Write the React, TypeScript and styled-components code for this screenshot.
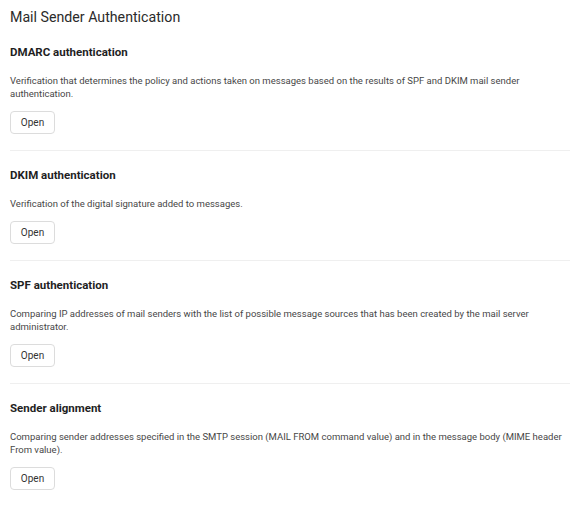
import React from 'react';
import styled, { createGlobalStyle } from 'styled-components';

const GlobalStyle = createGlobalStyle`
  body {
    margin: 0;
    background: #ffffff;
    font-family: Roboto, 'Liberation Sans', sans-serif;
    color: #262626;
  }
`;

const Page = styled.div`
  padding: 7px 13px 0 10px;
`;

const Title = styled.h1`
  margin: 0 0 1px;
  font-size: 14.2px;
  font-weight: 400;
  line-height: 20px;
  color: #2b2b2b;
`;

const Section = styled.section<{ last?: boolean }>`
  padding: 16px 0;
  border-bottom: ${(p) => (p.last ? 'none' : '1px solid #efefef')};
`;

const Heading = styled.h2`
  margin: 0 0 14px;
  font-size: 11.5px;
  font-weight: 700;
  line-height: 16px;
  color: #1f1f1f;
`;

const Description = styled.p`
  margin: 0 0 11px;
  font-size: 9.5px;
  line-height: 13px;
  color: #474747;
`;

const OpenButton = styled.button`
  display: inline-flex;
  align-items: center;
  justify-content: center;
  width: 45px;
  height: 23px;
  padding: 0;
  border: 1px solid #dcdcdc;
  border-radius: 4px;
  background: #ffffff;
  font-family: inherit;
  font-size: 10px;
  color: #333333;
`;

const items = [
  {
    title: 'DMARC authentication',
    text: 'Verification that determines the policy and actions taken on messages based on the results of SPF and DKIM mail sender authentication.',
  },
  {
    title: 'DKIM authentication',
    text: 'Verification of the digital signature added to messages.',
  },
  {
    title: 'SPF authentication',
    text: 'Comparing IP addresses of mail senders with the list of possible message sources that has been created by the mail server administrator.',
  },
  {
    title: 'Sender alignment',
    text: 'Comparing sender addresses specified in the SMTP session (MAIL FROM command value) and in the message body (MIME header From value).',
  },
];

export default function App() {
  return (
    <>
      <GlobalStyle />
      <Page>
        <Title>Mail Sender Authentication</Title>
        {items.map((item, i) => (
          <Section key={item.title} last={i === items.length - 1}>
            <Heading>{item.title}</Heading>
            <Description>{item.text}</Description>
            <OpenButton>Open</OpenButton>
          </Section>
        ))}
      </Page>
    </>
  );
}
